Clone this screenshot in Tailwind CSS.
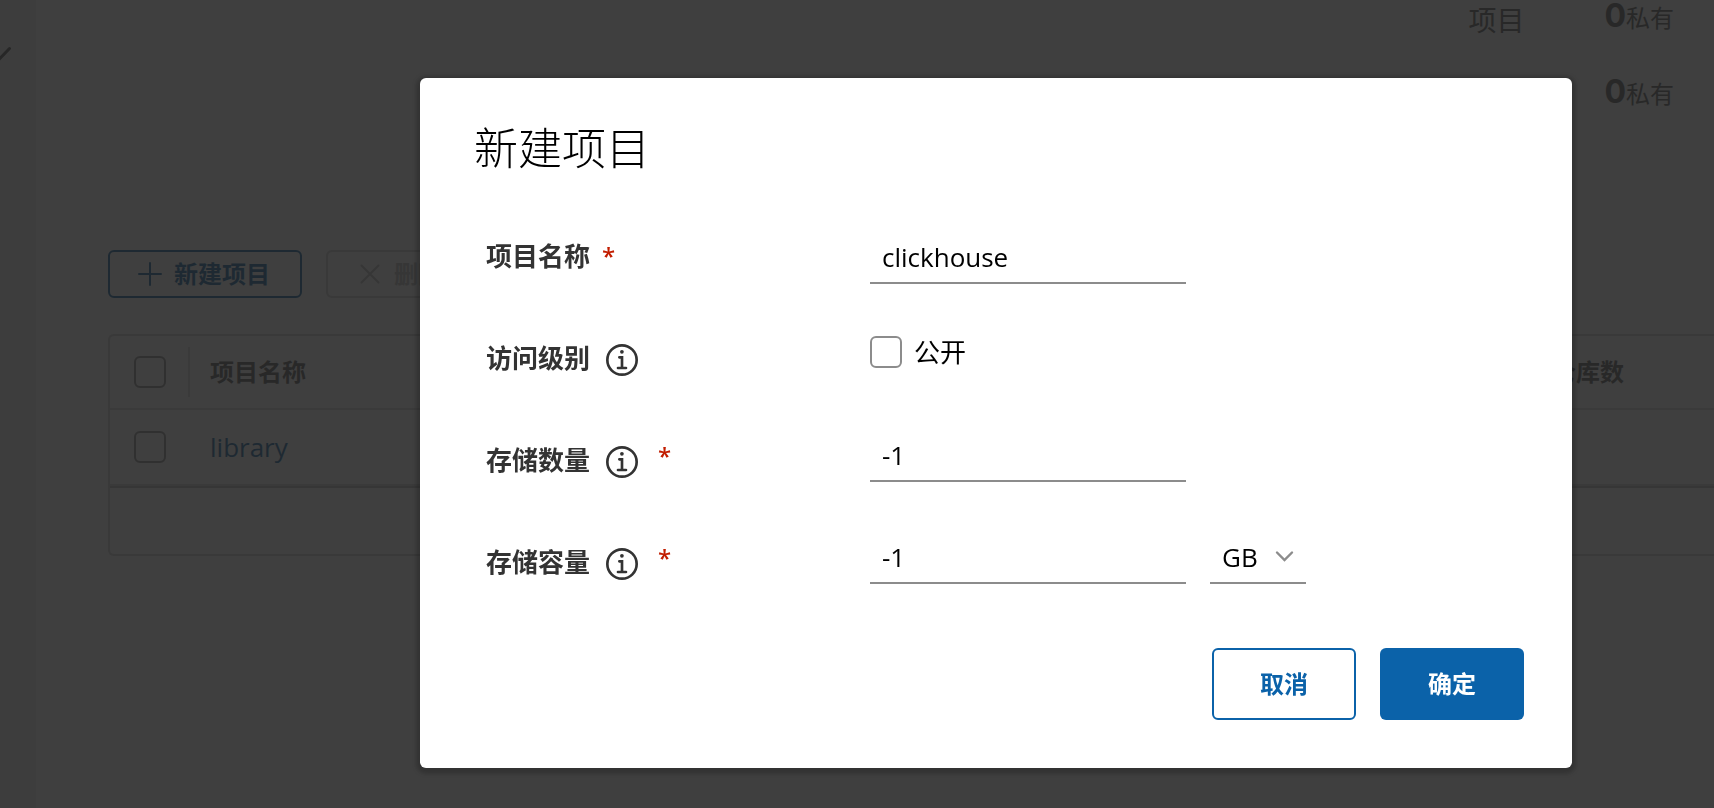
<!DOCTYPE html>
<html lang="zh-CN">
<head>
<meta charset="utf-8">
<meta name="viewport" content="width=device-width, initial-scale=1">
<title>新建项目</title>
<script src="https://cdn.jsdelivr.net/npm/@tailwindcss/browser@4"></script>
</head>
<body class="min-h-screen overflow-hidden bg-[#fafafa] font-['Open_Sans','Noto_Sans_CJK_SC',sans-serif] text-[26px] text-black">

<!-- Project list page -->
<div class="flex h-screen overflow-hidden" inert>
  <aside class="w-9 shrink-0 bg-[#eeeeee] pt-[46px]">
    <svg class="h-4 w-3" viewBox="0 0 12 16" fill="none" stroke="#444" stroke-width="3" stroke-linecap="round"><path d="M-2 14.500L9.500 2.500"/></svg>
  </aside>
  <main class="flex min-w-0 flex-1 flex-col pl-[72px] text-[#4d4d4d]">
    <section class="flex h-[250px] shrink-0 justify-end gap-20 pr-10">
      <p class="text-[28px] leading-10">项目</p>
      <div class="flex flex-col gap-10 text-2xl leading-9">
        <p class="flex h-9 items-center"><b class="pb-1 font-['Inter'] text-[32px] leading-8">0</b>私有</p>
        <p class="flex h-9 items-center"><b class="pb-1 font-['Inter'] text-[32px] leading-8">0</b>私有</p>
      </div>
    </section>

    <div class="flex gap-6 text-2xl font-bold">
      <button type="button" class="flex h-12 w-[194px] items-center gap-3 rounded-md border-2 border-[#005a9c] pl-7 text-[#005a9c]">
        <svg class="size-6" viewBox="0 0 24 24" fill="none" stroke="currentColor" stroke-width="2" stroke-linecap="round"><path d="M12 1v22M1 12h22"/></svg>新建项目
      </button>
      <button type="button" disabled class="flex h-12 w-[146px] items-center gap-3 rounded-md border-2 border-[#ccc] pl-[30px] text-[#b8b8b8]">
        <svg class="size-6" viewBox="0 0 24 24" fill="none" stroke="currentColor" stroke-width="2" stroke-linecap="round"><path d="M3.500 3.500l17 17M20.500 3.500l-17 17"/></svg>删除
      </button>
    </div>

    <div class="mt-9 rounded-l-md border-2 border-r-0 border-[#ccc]">
      <table class="w-full table-fixed border-separate border-spacing-0 text-left">
        <thead>
          <tr class="h-[74px] text-2xl">
            <th class="w-[80px] border-b-2 border-[#d8d8d8] p-0">
              <div class="flex h-[50px] items-center border-r-2 border-[#d8d8d8] pl-6"><input type="checkbox" aria-label="全选" class="size-8 appearance-none rounded-md border-2 border-[#8c8c8c]"></div>
            </th>
            <th class="border-b-2 border-[#d8d8d8] p-0 pl-5 font-bold">项目名称</th>
            <th class="w-[162px] border-b-2 border-[#d8d8d8] p-0 font-bold">仓库数</th>
          </tr>
        </thead>
        <tbody>
          <tr class="h-[76px]">
            <td class="border-b-2 border-[#d8d8d8] p-0 pl-6"><input type="checkbox" aria-label="选择 library" class="block size-8 appearance-none rounded-md border-2 border-[#8c8c8c]"></td>
            <td class="border-b-2 border-[#d8d8d8] p-0 pl-5"><a href="#" class="text-[#005a9c]">library</a></td>
            <td class="border-b-2 border-[#d8d8d8] p-0"></td>
          </tr>
        </tbody>
      </table>
      <div class="h-[68px] border-t-2 border-[#bbb]"></div>
    </div>
  </main>
</div>

<!-- Dialog -->
<div class="fixed inset-0 bg-[#222222]/87 pt-[78px] pr-[142px] pl-[420px]">
  <form role="dialog" aria-modal="true" aria-labelledby="dialog-title" class="rounded-md bg-white pt-10 pr-12 pb-12 pl-[54px] shadow-[0_2px_4px_4px_rgba(0,0,0,0.2)]">
    <h2 id="dialog-title" class="text-[44px] leading-[60px] font-extralight">新建项目</h2>

    <div class="mt-[27px] pl-3">
      <div class="flex h-[102px] items-center">
        <div class="flex w-96 shrink-0 items-center gap-3 font-bold text-[#333]">
          <label for="name">项目名称</label><span class="text-2xl font-semibold text-[#c21d00]">*</span>
        </div>
        <div class="pt-2"><input id="name" type="text" value="clickhouse" class="block h-12 w-[316px] border-b-2 border-[#8c8c8c] px-3 pb-1 outline-none"></div>
      </div>

      <div class="flex h-[102px] items-center">
        <div class="flex w-96 shrink-0 items-center gap-4 font-bold text-[#333]">
          <span>访问级别</span>
          <svg class="mt-1 size-8" viewBox="6 6 24 24" fill="currentColor"><circle cx="17.930" cy="11.900" r="1.400"/><path d="M21,23H19V15H16a1,1,0,0,0,0,2h1v6H15a1,1,0,1,0,0,2h6a1,1,0,0,0,0-2Z"/><path d="M18,6A12,12,0,1,0,30,18,12,12,0,0,0,18,6Zm0,22A10,10,0,1,1,28,18,10,10,0,0,1,18,28Z"/></svg>
        </div>
        <div class="flex items-center gap-3 pb-3">
          <input id="public" type="checkbox" class="size-8 appearance-none rounded-md border-2 border-[#8c8c8c]">
          <label for="public">公开</label>
        </div>
      </div>

      <div class="flex h-[102px] items-center">
        <div class="flex w-96 shrink-0 items-center gap-4 font-bold text-[#333]">
          <label for="count">存储数量</label>
          <svg class="mt-1 size-8" viewBox="6 6 24 24" fill="currentColor"><circle cx="17.930" cy="11.900" r="1.400"/><path d="M21,23H19V15H16a1,1,0,0,0,0,2h1v6H15a1,1,0,1,0,0,2h6a1,1,0,0,0,0-2Z"/><path d="M18,6A12,12,0,1,0,30,18,12,12,0,0,0,18,6Zm0,22A10,10,0,1,1,28,18,10,10,0,0,1,18,28Z"/></svg>
          <span class="pb-2 pl-1 text-2xl font-semibold text-[#c21d00]">*</span>
        </div>
        <div class="pb-1"><input id="count" type="text" value="-1" class="block h-12 w-[316px] border-b-2 border-[#8c8c8c] px-3 pb-1 outline-none"></div>
      </div>

      <div class="flex h-[102px] items-center">
        <div class="flex w-96 shrink-0 items-center gap-4 font-bold text-[#333]">
          <label for="size">存储容量</label>
          <svg class="mt-1 size-8" viewBox="6 6 24 24" fill="currentColor"><circle cx="17.930" cy="11.900" r="1.400"/><path d="M21,23H19V15H16a1,1,0,0,0,0,2h1v6H15a1,1,0,1,0,0,2h6a1,1,0,0,0,0-2Z"/><path d="M18,6A12,12,0,1,0,30,18,12,12,0,0,0,18,6Zm0,22A10,10,0,1,1,28,18,10,10,0,0,1,18,28Z"/></svg>
          <span class="pb-2 pl-1 text-2xl font-semibold text-[#c21d00]">*</span>
        </div>
        <div class="flex gap-6 pb-1">
          <input id="size" type="text" value="-1" class="block h-12 w-[316px] border-b-2 border-[#8c8c8c] px-3 pb-1 outline-none">
          <div class="relative">
            <select aria-label="容量单位" class="block h-12 w-24 appearance-none border-b-2 border-[#8c8c8c] pb-1 pl-3 outline-none">
              <option>GB</option><option>MB</option><option>TB</option>
            </select>
            <svg class="pointer-events-none absolute top-3.5 right-3 h-3 w-5" viewBox="0 0 20 12" fill="none" stroke="#8c8c8c" stroke-width="2.400" stroke-linecap="round"><path d="M3 2.500l7.500 7.500 7.500-7.500"/></svg>
          </div>
        </div>
      </div>
    </div>

    <div class="mt-[35px] flex justify-end gap-6 text-2xl font-bold">
      <button type="button" class="h-[72px] w-36 rounded-md border-2 border-[#0b62a9] text-[#0b62a9]">取消</button>
      <button type="submit" class="h-[72px] w-36 rounded-md bg-[#0b62a9] text-white">确定</button>
    </div>
  </form>
</div>
</body>
</html>
